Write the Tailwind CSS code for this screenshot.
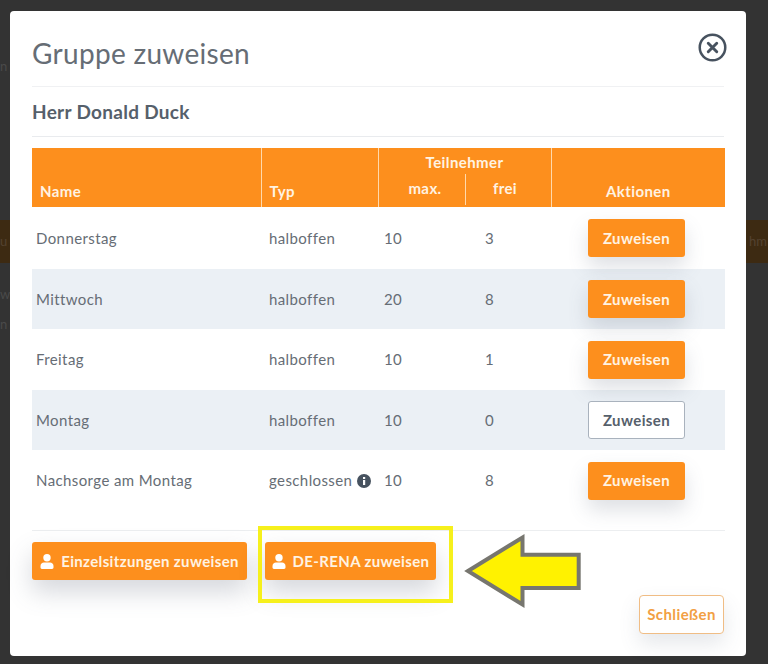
<!DOCTYPE html>
<html lang="de">
<head>
  <meta charset="UTF-8" />
  <title>Gruppe zuweisen</title>
  <script src="https://cdn.jsdelivr.net/npm/@tailwindcss/browser@4"></script>
</head>
<body class="bg-[#333333] font-['Lato','Noto_Sans',sans-serif] text-[#666d75]">
  <div class="relative h-[664px] w-[768px] overflow-hidden">
    <!-- page behind the overlay -->
    <div class="absolute left-0 top-[220px] flex h-[43px] w-full items-center justify-between bg-[#3d2a12] pr-[1px] text-[13px] text-[#544230]">
      <span>u</span><span>hm</span>
    </div>
    <span class="absolute left-0 top-[57px] text-[13px] text-[#4a4a4a]">n</span>
    <span class="absolute left-0 top-[285px] text-[13px] text-[#4a4a4a]">w</span>
    <span class="absolute left-0 top-[315px] text-[13px] text-[#4a4a4a]">n</span>

    <div class="absolute left-[10px] top-[11px] flex h-[645px] w-[736px] flex-col rounded-[4px] bg-white px-[22px]">
      <div class="flex h-[76px] shrink-0 items-center justify-between border-b border-[#f0f1f3]">
        <h1 class="mt-[9px] text-[28px] tracking-[0.3px] text-[#666d75]">Gruppe zuweisen</h1>
        <svg class="mr-[-3px] mt-[-2px] h-[29px] w-[29px]" viewBox="0 0 30 30" fill="none" stroke="#47525f">
          <circle cx="15" cy="15" r="13.2" stroke-width="2.6" />
          <path d="M10.6 10.6 19.4 19.4M19.4 10.6 10.6 19.4" stroke-width="3" stroke-linecap="round" />
        </svg>
      </div>
      <div class="flex h-[50px] shrink-0 items-center border-b border-[#e9ebee] pt-[1px] text-[19px] font-bold tracking-[0.3px] text-[#56606b]">Herr Donald Duck</div>

      <table class="mt-[11px] w-[693px] table-fixed border-collapse text-[15px] tracking-[0.4px]">
        <thead>
          <tr class="h-[59px] bg-[#fd8f1d] align-bottom text-[15px] font-bold text-[#fff3e2]">
            <th class="w-[229px] border-r border-[#ffd9ac] pb-[5px] pl-[8px] text-left font-bold">Name</th>
            <th class="w-[117px] border-r border-[#ffd9ac] pb-[5px] pl-[8px] text-left font-bold">Typ</th>
            <th class="w-[173px] border-r border-[#ffd9ac] p-0 font-bold">
              <div class="flex h-[59px] flex-col">
                <div class="flex h-[26px] items-end justify-center pb-[1px]">Teilnehmer</div>
                <div class="flex h-[31px]">
                  <div class="flex w-[87px] items-center justify-center border-r border-[#ffd9ac] pb-[3px] pl-[7px]">max.</div>
                  <div class="flex flex-1 items-center justify-center pb-[3px] pr-[6px]">frei</div>
                </div>
              </div>
            </th>
            <th class="pb-[5px] text-center font-bold">Aktionen</th>
          </tr>
        </thead>
        <tbody>
          <tr class="h-[62px]">
            <td class="pl-[4px]">Donnerstag</td>
            <td class="pl-[8px]">halboffen</td>
            <td><div class="flex"><span class="w-[107px] pl-[6px]">10</span><span>3</span></div></td>
            <td class="pl-[37px]"><button class="h-[38px] w-[97px] rounded-[3px] bg-[#fd8f1d] font-bold text-[#fff3e2] shadow-[0_10px_20px_rgba(90,100,120,0.2)]">Zuweisen</button></td>
          </tr>
          <tr class="h-[60px] bg-[#ebf0f5]">
            <td class="pl-[4px]">Mittwoch</td>
            <td class="pl-[8px]">halboffen</td>
            <td><div class="flex"><span class="w-[107px] pl-[6px]">20</span><span>8</span></div></td>
            <td class="pl-[37px]"><button class="h-[38px] w-[97px] rounded-[3px] bg-[#fd8f1d] font-bold text-[#fff3e2] shadow-[0_10px_20px_rgba(90,100,120,0.2)]">Zuweisen</button></td>
          </tr>
          <tr class="h-[61px]">
            <td class="pl-[4px]">Freitag</td>
            <td class="pl-[8px]">halboffen</td>
            <td><div class="flex"><span class="w-[107px] pl-[6px]">10</span><span>1</span></div></td>
            <td class="pl-[37px]"><button class="h-[38px] w-[97px] rounded-[3px] bg-[#fd8f1d] font-bold text-[#fff3e2] shadow-[0_10px_20px_rgba(90,100,120,0.2)]">Zuweisen</button></td>
          </tr>
          <tr class="h-[60px] bg-[#ebf0f5]">
            <td class="pl-[4px]">Montag</td>
            <td class="pl-[8px]">halboffen</td>
            <td><div class="flex"><span class="w-[107px] pl-[6px]">10</span><span>0</span></div></td>
            <td class="pl-[37px]"><button class="h-[38px] w-[97px] rounded-[3px] border border-[#a9b2bd] bg-white font-bold text-[#56606b]">Zuweisen</button></td>
          </tr>
          <tr class="h-[61px]">
            <td class="pl-[4px]">Nachsorge am Montag</td>
            <td class="pl-[8px]">
              <div class="flex items-center gap-[5px] whitespace-nowrap">geschlossen
                <svg class="h-[14px] w-[14px] shrink-0" viewBox="0 0 14 14"><circle cx="7" cy="7" r="7" fill="#47525f" /><rect x="6" y="6" width="2.2" height="5" fill="#fff" /><rect x="6" y="3" width="2.2" height="2" fill="#fff" /></svg>
              </div>
            </td>
            <td><div class="flex"><span class="w-[107px] pl-[6px]">10</span><span>8</span></div></td>
            <td class="pl-[37px]"><button class="h-[38px] w-[97px] rounded-[3px] bg-[#fd8f1d] font-bold text-[#fff3e2] shadow-[0_10px_20px_rgba(90,100,120,0.2)]">Zuweisen</button></td>
          </tr>
        </tbody>
      </table>

      <div class="mt-[19px] flex w-[693px] gap-[18px] border-t border-[#eceef0] pt-[11px] tracking-[0.35px]">
        <button class="flex h-[38px] w-[215px] items-center justify-center gap-[7px] rounded-[3px] bg-[#fd8f1d] text-[15px] font-bold text-[#fff3e2] shadow-[0_12px_24px_rgba(90,100,120,0.25)]">
          <svg class="h-[15px] w-[14px]" viewBox="0 0 14 15" fill="#fff"><circle cx="7" cy="3.8" r="3.7" /><path d="M0.5 13.6V12C0.5 10 2.1 8.6 4 8.6H10C11.9 8.6 13.5 10 13.5 12V13.6C13.5 14.4 12.9 15 12.1 15H1.9C1.1 15 0.5 14.4 0.5 13.6Z" /></svg>
          Einzelsitzungen zuweisen
        </button>
        <button class="flex h-[38px] w-[171px] items-center justify-center gap-[7px] rounded-[3px] bg-[#fd8f1d] text-[15px] font-bold text-[#fff3e2] shadow-[0_12px_24px_rgba(90,100,120,0.25)]">
          <svg class="h-[15px] w-[14px]" viewBox="0 0 14 15" fill="#fff"><circle cx="7" cy="3.8" r="3.7" /><path d="M0.5 13.6V12C0.5 10 2.1 8.6 4 8.6H10C11.9 8.6 13.5 10 13.5 12V13.6C13.5 14.4 12.9 15 12.1 15H1.9C1.1 15 0.5 14.4 0.5 13.6Z" /></svg>
          DE-RENA zuweisen
        </button>
      </div>

      <button class="absolute left-[629px] top-[584px] h-[39px] w-[85px] rounded-[4px] border border-[#f0bd85] bg-white text-[15px] font-bold tracking-[0.4px] text-[#f2a043] shadow-[0_10px_20px_rgba(90,100,120,0.15)]">Schließen</button>
    </div>

    <!-- annotation drawn over the screenshot -->
    <div class="absolute left-[258px] top-[526px] h-[77px] w-[195px] border-[4px] border-[#f6f01c]"></div>
    <svg class="absolute left-[460px] top-[530px] h-[80px] w-[125px]" viewBox="0 0 125 80">
      <path d="M8 41 L62.5 7.5 V24.7 H118.7 V58 H62.5 V74.5 Z" fill="#fff200" stroke="#77766f" stroke-width="4" stroke-linejoin="miter" />
    </svg>
  </div>
</body>
</html>
